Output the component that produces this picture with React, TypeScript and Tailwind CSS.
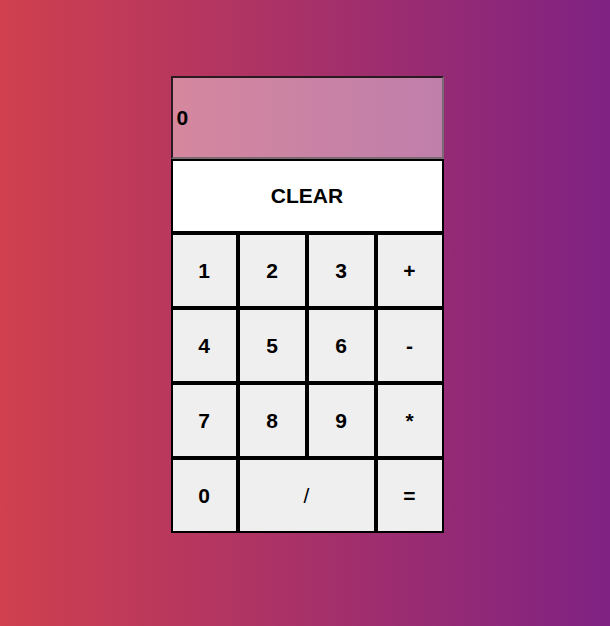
const KEYS: { label: string; wide?: boolean }[] = [
  { label: "1" },
  { label: "2" },
  { label: "3" },
  { label: "+" },
  { label: "4" },
  { label: "5" },
  { label: "6" },
  { label: "-" },
  { label: "7" },
  { label: "8" },
  { label: "9" },
  { label: "*" },
  { label: "0" },
  { label: "/", wide: true },
  { label: "=" },
]

export default function App() {
  return (
    <div
      className="flex min-h-screen justify-center bg-[linear-gradient(to_right,#d0404e,#7f2283)] pl-[4px] pt-[76px]"
      style={{ fontFamily: '"Liberation Sans", Arial, sans-serif' }}
    >
      <div className="flex w-[273px] flex-col self-start">
        <div className="flex h-[83px] items-center border-2 border-t-[#2a1a22] border-l-[#2a1a22] border-r-[#7a6a72] border-b-[#7a6a72] bg-white/40 pl-[4px] text-[21px] font-bold text-black">
          0
        </div>
        <button className="h-[74px] border-2 border-black bg-white text-[21px] font-bold text-black">
          CLEAR
        </button>
        <div className="grid grid-cols-[67px_69px_69px_68px] grid-rows-[75px_75px_75px_75px]">
          {KEYS.map((k) => (
            <button
              key={k.label}
              className={
                "border-2 border-black bg-[#efefef] text-[21px] font-bold text-black" +
                (k.wide ? " col-span-2 font-normal" : "")
              }
            >
              {k.label}
            </button>
          ))}
        </div>
      </div>
    </div>
  )
}
